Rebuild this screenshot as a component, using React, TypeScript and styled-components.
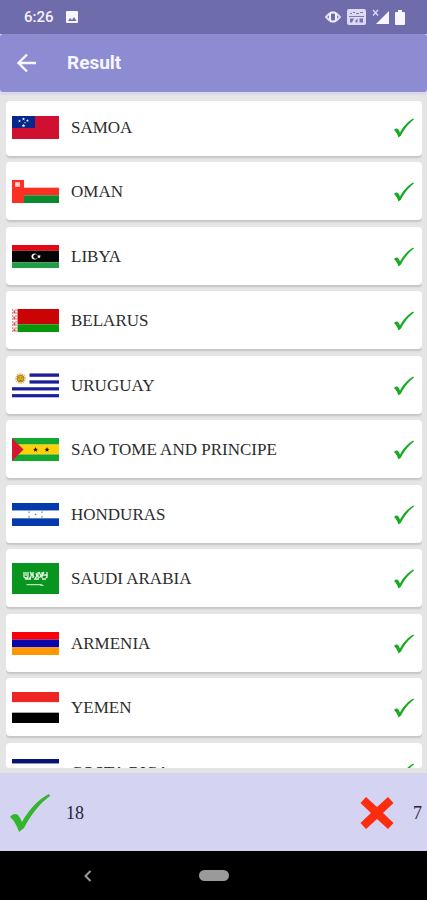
import React from "react";
import styled, { createGlobalStyle } from "styled-components";

const GlobalStyle = createGlobalStyle`
  * { box-sizing: border-box; }
  body { margin: 0; background: #e5e5e5; }
`;

const Screen = styled.div`
  display: flex;
  flex-direction: column;
  height: 100vh;
  overflow: hidden;
  background: #e5e5e5;
  font-family: "Liberation Serif", serif;
`;

const StatusBar = styled.header`
  display: flex;
  flex: none;
  align-items: center;
  justify-content: space-between;
  height: 34px;
  padding: 0 22px 0 24px;
  background: #6f6cac;
  color: #f4f2ff;
  font: 500 15px/20px Roboto, sans-serif;
`;

const StatusGroup = styled.div<{ $gap: number }>`
  display: flex;
  align-items: center;
  gap: ${(p) => p.$gap}px;
  svg { display: block; }
`;

const AppBar = styled.div`
  display: flex;
  flex: none;
  align-items: center;
  gap: 28px;
  height: 58px;
  padding: 0 15px;
  border-radius: 3px;
  background: #8d8cd3;
  box-shadow: 0 3px 0 #dad8ef;
`;

const IconButton = styled.button`
  display: flex;
  padding: 0;
  border: 0;
  background: none;
  color: inherit;
  cursor: pointer;
`;

const Title = styled.h1`
  margin: 0;
  color: #f7f6ff;
  font: 700 19px/24px Roboto, sans-serif;
`;

const Results = styled.main`
  flex: 1;
  min-height: 0;
  margin: 9px 5px 5px 6px;
  overflow-y: auto;
  border-radius: 3px;
  scrollbar-width: none;
`;

const List = styled.ul`
  margin: -3px 0 0;
  padding: 0;
  list-style: none;
`;

const Card = styled.li`
  display: grid;
  grid-template-columns: 47px 1fr 20px;
  align-items: center;
  column-gap: 12px;
  height: 58px;
  margin-bottom: 6px;
  padding: 1px 8px 0 6px;
  border-radius: 4px;
  background: #fff;
  box-shadow: 0 2px 2px #c4c4c4;
  &:nth-child(even) { margin-bottom: 7px; }
`;

const Country = styled.span`
  color: #2c2c2c;
  font-size: 17px;
  line-height: 24px;
`;

const Summary = styled.footer`
  display: flex;
  flex: none;
  align-items: center;
  justify-content: space-between;
  height: 78px;
  padding: 2px 5px 0 10px;
  background: #d4d3f1;
`;

const Score = styled.div`
  display: flex;
  align-items: center;
  gap: 16px;
  color: #26243c;
  font-size: 18px;
  line-height: 24px;
`;

const WrongScore = styled(Score)`
  gap: 19px;
`;

const NavBar = styled.nav`
  display: grid;
  flex: none;
  grid-template-columns: 1fr auto 1fr;
  align-items: center;
  height: 49px;
  background: #000;
  color: #999;
`;

const BackButton = styled(IconButton)`
  justify-self: center;
  margin-right: 22px;
`;

const HomePill = styled.button`
  width: 30px;
  height: 11px;
  padding: 0;
  border: 0;
  border-radius: 6px;
  background: #9a9a9a;
`;

const FlagArt = styled.svg`
  display: block;
  width: 47px;
`;

const star = (x: number, y: number, r: number) =>
  Array.from({ length: 10 }, (_, i) => {
    const a = -Math.PI / 2 + (i * Math.PI) / 5;
    const d = i % 2 ? r * 0.42 : r;
    return `${(x + d * Math.cos(a)).toFixed(2)},${(y + d * Math.sin(a)).toFixed(2)}`;
  }).join(" ");

type Stripe = [color: string, weight: number];

function Flag({ height, stripes, children }: { height: number; stripes: Stripe[]; children?: React.ReactNode }) {
  const total = stripes.reduce((s, [, w]) => s + w, 0);
  let y = 0;
  return (
    <FlagArt height={height} viewBox={`0 0 47 ${height}`} preserveAspectRatio="none" aria-hidden="true">
      {stripes.map(([color, w], i) => {
        const h = (w / total) * height;
        const rect = <rect key={i} y={y} width="47" height={h} fill={color} />;
        y += h;
        return rect;
      })}
      {children}
    </FlagArt>
  );
}

const W = "#fff";
const U = "#1c1f9a";

const countries: { name: string; flag: React.ReactNode }[] = [
  {
    name: "SAMOA",
    flag: (
      <Flag height={23} stripes={[["#cf1030", 1]]}>
        <rect width="23" height="12" fill="#06278b" />
        {[[11.5, 3, 1.7], [7.5, 5, 1.5], [15.5, 4.5, 1.5], [13, 6.7, 1], [11.5, 9.7, 1.9]].map(([x, y, r]) => (
          <polygon key={`${x}-${y}`} points={star(x, y, r)} fill="#fff" />
        ))}
      </Flag>
    ),
  },
  {
    name: "OMAN",
    flag: (
      <Flag height={23} stripes={[[W, 1], ["#fb3023", 1], ["#068b31", 1]]}>
        <rect width="12" height="23" fill="#fb3023" />
        <circle cx="5.500" cy="4.500" r="2.600" fill="#ffc4bb" />
        <path d="M3 2.500l5 4M8 2.500l-5 4" stroke="#ffe2dc" strokeWidth="1" />
      </Flag>
    ),
  },
  {
    name: "LIBYA",
    flag: (
      <Flag height={23} stripes={[["#e10915", 1], ["#050505", 2], ["#239c46", 1]]}>
        <circle cx="22.500" cy="11.500" r="3" fill="#fff" />
        <circle cx="23.600" cy="11.500" r="2.300" fill="#050505" />
        <polygon points={star(27, 11.5, 2.2)} fill="#fff" />
      </Flag>
    ),
  },
  {
    name: "BELARUS",
    flag: (
      <Flag height={23} stripes={[["#ca0404", 2], ["#08960b", 1]]}>
        <rect width="5.500" height="23" fill="#fff" />
        <path d="M.8 0v23M4 0v23" stroke="#d65252" strokeWidth=".9" strokeDasharray="2 1" />
        <path d="M2.400 1l1.200 2-1.200 2-1.200-2zM2.400 7l1.200 2-1.200 2-1.200-2zM2.400 13l1.200 2-1.200 2-1.200-2zM2.400 19l1.200 2-1.200 2-1.200-2z" fill="#d65252" />
      </Flag>
    ),
  },
  {
    name: "URUGUAY",
    flag: (
      <Flag height={31} stripes={[[W, 1], [U, 1], [W, 1], [U, 1], [W, 1], [U, 1], [W, 1], [U, 1], [W, 1]]}>
        <rect width="17.500" height="17" fill="#fff" />
        <circle cx="8.500" cy="8.500" r="4.700" fill="none" stroke="#d8b549" strokeWidth="1.500" strokeDasharray="1 .8" />
        <circle cx="8.500" cy="8.500" r="3.500" fill="#e2b01c" stroke="#806213" strokeWidth=".7" />
        <path d="M6.500 7.800h1.200M9.300 7.800h1.200M7.200 10.300h2.600" stroke="#6b500e" strokeWidth=".7" />
      </Flag>
    ),
  },
  {
    name: "SAO TOME AND PRINCIPE",
    flag: (
      <Flag height={23} stripes={[["#12a92e", 2], ["#ffcf08", 3], ["#12a92e", 2]]}>
        <path d="M0 0L11.500 11.500L0 23z" fill="#d51632" />
        <polygon points={star(23.5, 11.7, 2.6)} fill="#111" />
        <polygon points={star(35, 11.7, 2.6)} fill="#111" />
      </Flag>
    ),
  },
  {
    name: "HONDURAS",
    flag: (
      <Flag height={23} stripes={[["#0539ac", 1], [W, 1], ["#0539ac", 1]]}>
        {[[17, 9.2], [30, 9.2], [23.5, 11.5], [17, 14], [30, 14]].map(([x, y]) => (
          <polygon key={`${x}-${y}`} points={star(x, y, 1.3)} fill="#6584ce" />
        ))}
      </Flag>
    ),
  },
  {
    name: "SAUDI ARABIA",
    flag: (
      <Flag height={31} stripes={[["#07951f", 1]]}>
        <path
          d="M12 9v5q2 2 4 0V9M14 9v4M17 15q3 0 2-5M18 9l4 5M21 9v6M23 15q3-1 1-5M26 9v5q2 1 3-1l-2-4M30 9v6M32 9q-3 4 1 3t1 3M35 9v6M13 16h6M22 16h5M30 16h4"
          fill="none"
          stroke="#e2f6df"
          strokeWidth="1.300"
        />
        <path d="M14.500 21.700h14l3 .8M29 21v2" fill="none" stroke="#e2f6df" strokeWidth="1" />
      </Flag>
    ),
  },
  { name: "ARMENIA", flag: <Flag height={23} stripes={[["#fb0008", 1], ["#0904ac", 1], ["#ff9800", 1]]} /> },
  { name: "YEMEN", flag: <Flag height={31} stripes={[["#ef2525", 1], [W, 1], ["#000", 1]]} /> },
  {
    name: "COSTA RICA",
    flag: <Flag height={28} stripes={[["#071575", 1], [W, 1], ["#ce1126", 2], [W, 1], ["#071575", 1]]} />,
  },
];

function Check({ size, color }: { size: number; color: string }) {
  return (
    <svg width={size} height={size} viewBox="0 0 40 40" role="img" aria-label="Correct">
      <path d="M0 24C2 21 6 20 8 22Q10 24 12 29C18 18 28 6 39 1L40 3C30 10 20 23 14 35L9 39C7 33 4 27 0 24Z" fill={color} />
    </svg>
  );
}

export default function App() {
  return (
    <Screen>
      <GlobalStyle />
      <StatusBar>
        <StatusGroup $gap={12}>
          <span>6:26</span>
          <svg width="12" height="12" viewBox="0 0 12 12" aria-hidden="true">
            <rect width="12" height="12" rx="1" fill="#f7f5ff" />
            <path d="M2 10l2-3 2 2 2-3 2.500 4z" fill="#6f6cac" />
          </svg>
        </StatusGroup>
        <StatusGroup $gap={6}>
          <svg width="16" height="12" viewBox="0 0 16 12" fill="none" aria-hidden="true">
            <path d="M4.500 2.500L1 6l3.500 3.500M11.500 2.500L15 6l-3.500 3.500" stroke="#dddaf4" strokeWidth="2" />
            <rect x="5" y="1.500" width="6" height="9" rx="2" stroke="#f4f2ff" strokeWidth="2" />
          </svg>
          <svg width="19" height="16" viewBox="0 0 19 16" aria-hidden="true">
            <rect width="19" height="16" rx="2" fill="#dddaf4" />
            <path d="M3 4.500h2M6 3.500h2M9 4.500h3M13 3.500h3M2 7.500h15" stroke="#7d7ab5" strokeWidth="1" />
            <path d="M3 9.500h4l-2 4H3zM8.500 13.500v-2l2-2v4zM12.500 9.500h3.500v4h-3.500z" fill="#7572b0" />
          </svg>
          <svg width="17" height="16" viewBox="0 0 17 16" aria-hidden="true">
            <path d="M17 2v13H4z" fill="#f7f5ff" />
            <path d="M1 1l5 5.500M6 1L1 6.500" stroke="#dddaf4" strokeWidth="1.300" />
          </svg>
          <svg width="10" height="15" viewBox="0 0 10 15" aria-hidden="true">
            <path d="M3 0h4v2h2q1 0 1 1v11q0 1-1 1H1q-1 0-1-1V3q0-1 1-1h2z" fill="#f7f5ff" />
          </svg>
        </StatusGroup>
      </StatusBar>
      <AppBar>
        <IconButton aria-label="Back">
          <svg width="24" height="24" viewBox="0 0 24 24" fill="none" stroke="#f7f6ff" strokeWidth="2.400" aria-hidden="true">
            <path d="M21 12H4M12 3.500L3.500 12l8.500 8.500" />
          </svg>
        </IconButton>
        <Title>Result</Title>
      </AppBar>
      <Results>
        <List>
          {countries.map((c) => (
            <Card key={c.name}>
              {c.flag}
              <Country>{c.name}</Country>
              <Check size={20} color="#18aa20" />
            </Card>
          ))}
        </List>
      </Results>
      <Summary>
        <Score>
          <Check size={40} color="#35b52c" />
          <span>18</span>
        </Score>
        <WrongScore>
          <svg width="34" height="34" viewBox="0 0 34 34" role="img" aria-label="Wrong">
            <path d="M6 1L17 11L28 1L33.500 7L23 17L33.500 27L28 33L17 23L6 33L.5 27L11 17L.5 7Z" fill="#fc2c0d" />
          </svg>
          <span>7</span>
        </WrongScore>
      </Summary>
      <NavBar>
        <BackButton aria-label="System back">
          <svg width="8" height="12" viewBox="0 0 8 12" fill="none" stroke="currentColor" strokeWidth="2" aria-hidden="true">
            <path d="M6.500 1L1.500 6l5 5" />
          </svg>
        </BackButton>
        <HomePill aria-label="Home" />
        <span />
      </NavBar>
    </Screen>
  );
}
